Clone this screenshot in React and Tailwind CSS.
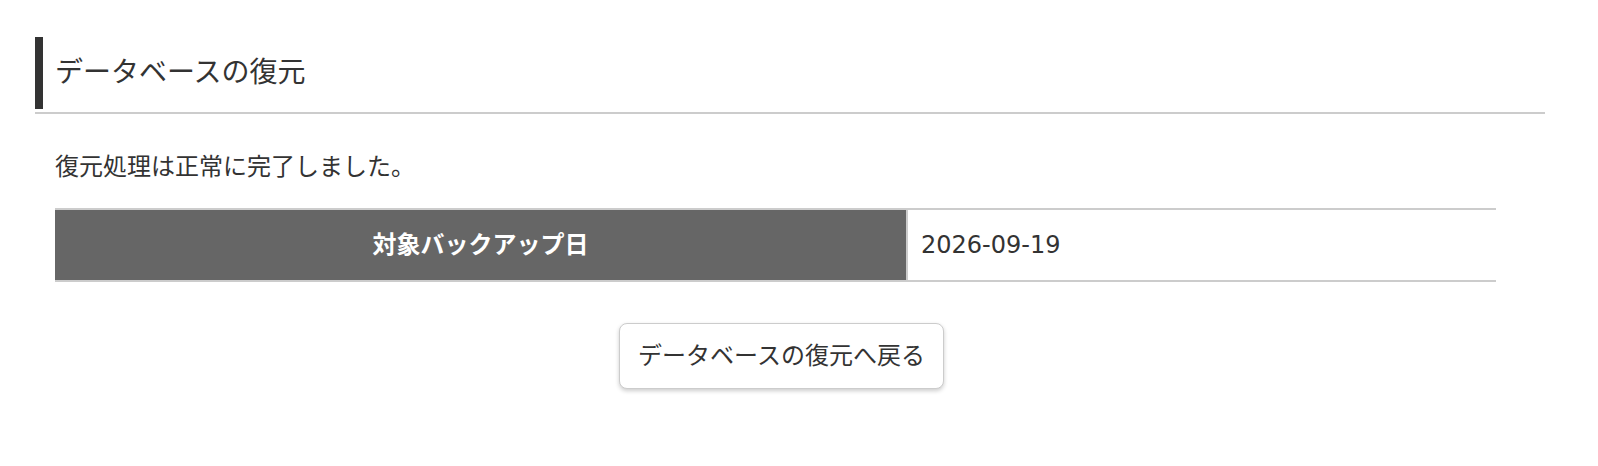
import React from 'react';

const fontStack = { fontFamily: '"DejaVu Sans", "Noto Sans CJK JP", sans-serif' };

const RestoreResult = () => {
  return (
    <div className="min-h-[466px] bg-white pt-[37px] pl-[35px] pr-[53px] text-[#333]" style={fontStack}>
      {/* 見出し */}
      <div className="border-b-2 border-[#ccc] pb-[3px]">
        <h2 className="flex h-[72px] items-center border-l-8 border-[#333] pl-3 text-[28px] font-normal leading-none">
          データベースの復元
        </h2>
      </div>

      <div className="ml-5 w-[1453px]">
        <p className="mt-[35px] text-[24px] leading-[36px]">復元処理は正常に完了しました。</p>

        <div className="mt-[23px] flex w-[1441px] border-y-2 border-[#ccc]">
          <div className="flex h-[70px] w-[853px] items-center justify-center border-r-2 border-[#ccc] bg-[#666] text-[24px] font-bold text-white">
            対象バックアップ日
          </div>
          <div className="flex h-[70px] flex-1 items-center pl-[13px] text-[24px]">2026-09-19</div>
        </div>

        <div className="mt-[41px] flex justify-center">
          <button
            type="button"
            className="h-[66px] w-[325px] rounded-lg border border-[#ccc] bg-white text-[24px] text-[#333] shadow-[0_2px_4px_rgba(0,0,0,0.2)]"
          >
            データベースの復元へ戻る
          </button>
        </div>
      </div>
    </div>
  );
};

export default function App() {
  return <RestoreResult />;
}
